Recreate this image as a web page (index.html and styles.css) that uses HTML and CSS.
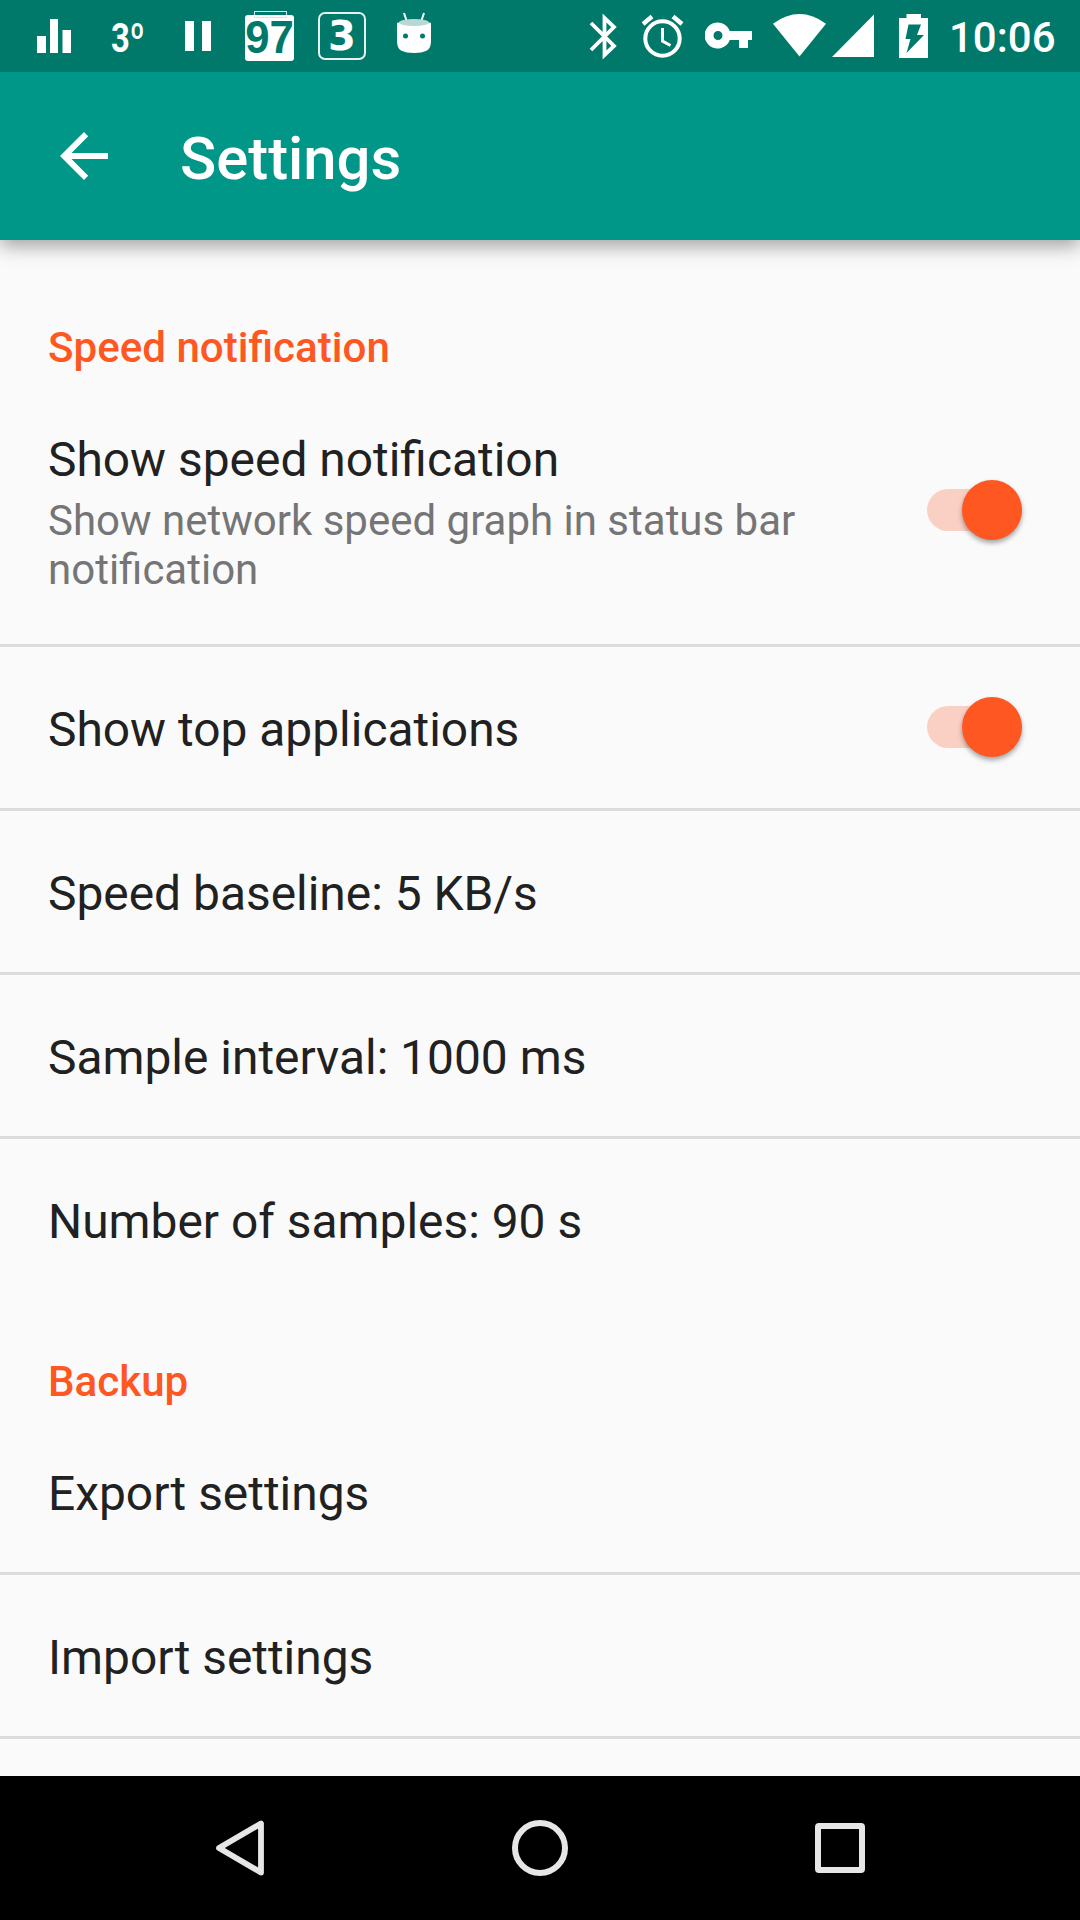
FILE: index.html
```html
<!DOCTYPE html>
<html lang="en">
<head>
<meta charset="utf-8">
<title>Settings</title>
<link rel="stylesheet" href="styles.css">
</head>
<body>
<div class="screen">
  <div class="status-bar">
    <svg class="status-icon" width="34" height="72" viewBox="37 0 34 72"><path d="M37 36h9v17h-9zM50 19h8v34h-8zM62.500 30h8.500v23h-8.500z"/></svg>
    <span class="temperature">3º</span>
    <svg class="status-icon pause" width="26" height="72" viewBox="185 0 26 72"><path d="M185 21h9v30h-9zM202 21h9v30h-9z"/></svg>
    <div class="battery-percent"><span>97</span></div>
    <div class="count"><span>3</span></div>
    <svg class="status-icon bot" width="34" height="72" viewBox="397 0 34 72"><path d="M404 13l3 9M424 13l-3 9" fill="none" stroke="#fff" stroke-width="2"/><path d="M397 23q17-7 34 0V41Q431 48 427 50.500Q422 53 414 53Q406 53 401 50.500Q397 48 397 41z"/><ellipse cx="414" cy="22.500" rx="15" ry="3.600" fill="#b7d8d4"/><circle class="hole" cx="405.500" cy="36" r="2.500"/><circle class="hole" cx="422.500" cy="36" r="2.500"/></svg>
    <span class="spacer"></span>
    <svg class="status-icon bluetooth" width="28" height="72" viewBox="589 0 28 72"><path d="M591 23L614 46L604.500 55V18L614 27L591 50" fill="none" stroke="#fff" stroke-width="3.800"/></svg>
    <svg class="status-icon alarm" width="42" height="72" viewBox="642 0 42 72"><g fill="none" stroke="#fff"><circle cx="662.500" cy="38.500" r="17.200" stroke-width="4"/><path d="M662.500 28v13l8 4.500" stroke-width="3"/><path d="M643 24l9-7.500M682 24l-9-7.500" stroke-width="4.500"/></g></svg>
    <svg class="status-icon key" width="48" height="72" viewBox="705 0 48 72"><path fill-rule="evenodd" d="M729.800 31H752v9h-4v8h-9v-8h-9.200A13 13 0 1 1 729.800 31zM718 31a4.500 4.500 0 1 0 0 9a4.500 4.500 0 1 0 0-9z"/></svg>
    <svg class="status-icon wifi" width="54" height="72" viewBox="773 0 54 72"><path d="M773 23.700Q799.500 4.500 826 23.700L799.500 56.500z"/></svg>
    <svg class="status-icon signal" width="42" height="72" viewBox="832 0 42 72"><path d="M832 57L874 14.500V57z"/></svg>
    <svg class="status-icon battery" width="29" height="72" viewBox="899 0 29 72"><path d="M899 18h7.500v-4H921v4h7v40h-29z"/><path class="hole" d="M908.500 24.500h12.500l-4 10.500h7l-17.500 18 4-14h-5z"/></svg>
    <span class="clock">10:06</span>
  </div>
  <header class="toolbar">
    <svg class="back" width="48" height="48" viewBox="0 0 48 48"><path d="M48 21H11.500L28.200 4.200L24 0L0 24L24 48L28.200 43.800L11.500 27H48z"/></svg>
    <h1 class="toolbar-title">Settings</h1>
  </header>
  <main class="preferences">
    <h2 class="category">Speed notification</h2>
    <div class="preference detailed">
      <div class="labels">
        <div class="title">Show speed notification</div>
        <div class="summary">Show network speed graph in status bar notification</div>
      </div>
      <div class="switch"></div>
    </div>
    <div class="preference"><div class="title">Show top applications</div><div class="switch"></div></div>
    <div class="preference"><div class="title">Speed baseline: 5 KB/s</div></div>
    <div class="preference"><div class="title">Sample interval: 1000 ms</div></div>
    <div class="preference last"><div class="title">Number of samples: 90 s</div></div>
    <h2 class="category backup">Backup</h2>
    <div class="preference"><div class="title">Export settings</div></div>
    <div class="preference"><div class="title">Import settings</div></div>
  </main>
  <nav class="nav-bar">
    <svg width="1080" height="144" viewBox="0 0 1080 144"><g fill="none" stroke="#e6e6e6" stroke-linejoin="round"><path d="M261 47.500V96.500L219 72z" stroke-width="5.800"/><circle cx="540" cy="72" r="25" stroke-width="6"/><rect x="818" y="50" width="44" height="44" rx="1" stroke-width="6"/></g></svg>
  </nav>
</div>
</body>
</html>
```
FILE: styles.css
```css
* { box-sizing: border-box; }

body {
  margin: 0;
  background: #fafafa;
  font-family: Roboto, sans-serif;
}

.screen {
  display: flex;
  flex-direction: column;
  width: 1080px;
  height: 1920px;
  overflow: hidden;
}

.status-bar {
  display: flex;
  align-items: center;
  flex: none;
  z-index: 2;
  height: 72px;
  padding: 0 24px 0 37px;
  background: #00796b;
  color: #fff;
}

.status-icon { flex: none; fill: #fff; }
.hole { fill: #00796b; }

.temperature {
  width: 33px;
  margin-left: 40px;
  padding-top: 4px;
  font: bold 41px/72px Roboto, sans-serif;
  transform: scaleX(.8);
  transform-origin: left;
}

.pause { margin-left: 41px; }

.battery-percent {
  display: flex;
  justify-content: center;
  flex: none;
  position: relative;
  width: 49px;
  height: 46px;
  margin: 4px 0 0 34px;
  border-radius: 3px;
  background: #fff;
  color: #00796b;
  font: bold 46px/44px "Liberation Sans", sans-serif;
}

.battery-percent span { transform: scaleX(.95); }

.battery-percent::before {
  content: "";
  position: absolute;
  left: 9px;
  top: -4px;
  width: 31px;
  height: 5px;
  border: 1px solid #d5e8e6;
}

.count {
  display: flex;
  justify-content: center;
  flex: none;
  width: 48px;
  height: 48px;
  margin-left: 24px;
  border: 2px solid #e6f1f0;
  border-radius: 7px;
  font: bold 40px/45px "DejaVu Sans", sans-serif;
}

.bot { margin-left: 31px; }
.spacer { flex: 1; }
.alarm { margin-left: 25px; }
.key { margin-left: 21px; }
.wifi { margin-left: 20px; }
.signal { margin-left: 5px; }
.battery { margin-left: 25px; }

.clock {
  width: 107px;
  margin-left: 21px;
  padding-top: 3px;
  font: 500 42px/72px Roboto, sans-serif;
}

.toolbar {
  display: flex;
  align-items: center;
  flex: none;
  z-index: 1;
  height: 168px;
  padding: 0 60px;
  background: #009688;
  color: #fff;
  box-shadow: 0 6px 18px rgba(0, 0, 0, .36);
}

.back { fill: #fff; }

.toolbar-title {
  margin: 6px 0 0 72px;
  font: 500 59.8px/70px Roboto, sans-serif;
}

.preferences {
  flex: 1;
  min-height: 0;
  padding-top: 72px;
  overflow: hidden;
}

.category {
  height: 65px;
  margin: 0;
  padding: 0 48px;
  color: #ff5722;
  font: 500 42.1px/72px Roboto, sans-serif;
}

.preference {
  display: flex;
  align-items: center;
  justify-content: space-between;
  height: 164px;
  padding: 0 58px 1px 48px;
  border-bottom: 3px solid #dcdcdc;
}

.title {
  padding-top: 5px;
  color: #212121;
  font-size: 47.9px;
  line-height: 56px;
}

.preference.detailed { height: 270px; }
.preference.last { height: 161px; margin-bottom: 46px; border-bottom: 0; }
.labels { width: 780px; }
.labels .title { padding-top: 5px; }

.summary {
  margin-top: 8px;
  color: #757575;
  font-size: 42px;
  line-height: 49px;
}

.switch {
  display: flex;
  align-items: center;
  justify-content: flex-end;
  width: 95px;
  height: 42px;
  border-radius: 21px;
  background: #fbd0c4;
}

.switch::after {
  content: "";
  flex: none;
  width: 60px;
  height: 60px;
  border-radius: 50%;
  background: #ff5722;
  box-shadow: 0 3px 5px rgba(0, 0, 0, .35);
}

.nav-bar { flex: none; height: 144px; background: #000; }
.nav-bar svg { display: block; }
```
